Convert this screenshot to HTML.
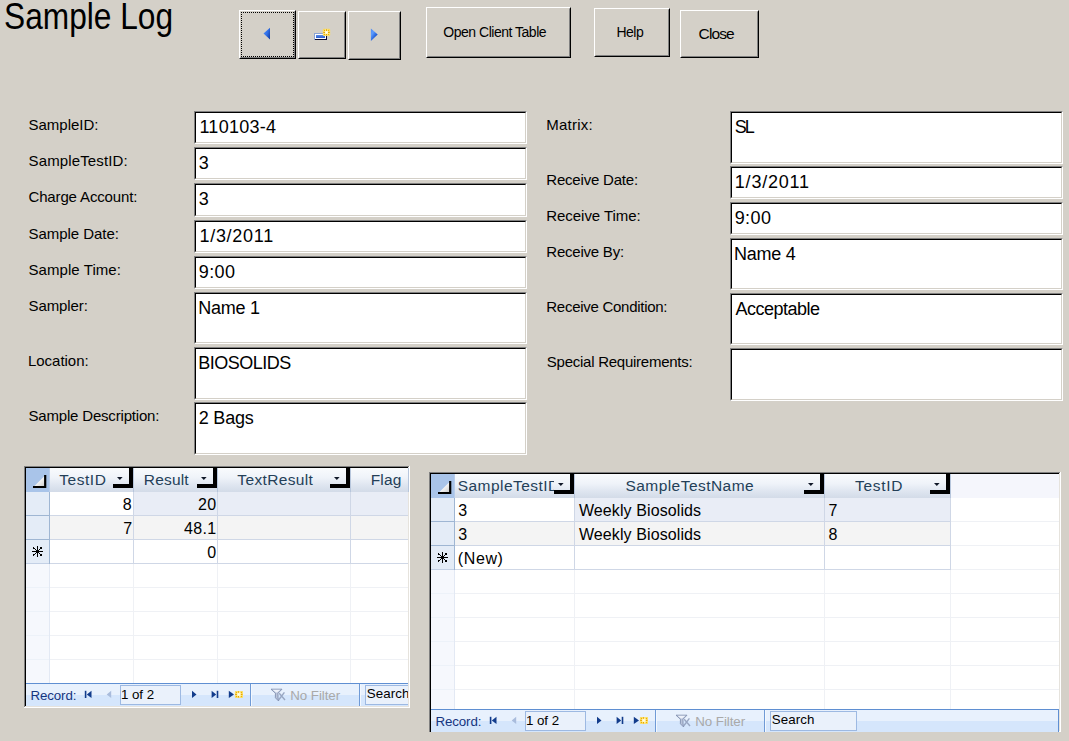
<!DOCTYPE html>
<html><head><meta charset="utf-8"><title>Sample Log</title>
<style>
html,body{margin:0;padding:0;}
body{width:1069px;height:741px;background:#d4d0c8;position:relative;overflow:hidden;font-family:"Liberation Sans",sans-serif;}
.t{position:absolute;white-space:pre;line-height:1;transform-origin:0 50%;}
div{position:absolute;box-sizing:border-box;}
.btn{border:1px solid;border-color:#fff #000 #000 #fff;background:#d4d0c8;}
.btn:after{content:"";position:absolute;left:0;top:0;right:0;bottom:0;border:1px solid;border-color:#d4d0c8 #808080 #808080 #d4d0c8;}
.fld{background:#fff;border:1px solid;border-color:#808080 #fff #fff #808080;}
.fld:after{content:"";position:absolute;left:0;top:0;right:0;bottom:0;border:1px solid;border-color:#000 #d4d0c8 #d4d0c8 #000;}
.frame{background:#fff;border:1px solid;border-color:#808080 #fff #fff #808080;overflow:hidden;}
.frame>.in{left:0;top:0;right:0;bottom:0;border:1px solid;border-color:#000 #d4d0c8 #d4d0c8 #000;border-right:none;border-bottom:none;overflow:hidden;}
.hl{height:1px;}
.vl{width:1px;}
svg{position:absolute;overflow:visible;}
</style></head><body>

<span class="t " style="top:-1px;font-size:36px;color:#000;left:4.4px;transform:scaleX(0.88);">Sample Log</span>
<div class="btn" style="left:239px;top:10px;width:57px;height:49px;"></div>
<div style="left:241px;top:12px;width:53px;height:1px;background:repeating-linear-gradient(90deg,#000 0 1px,transparent 1px 2px);"></div>
<div style="left:241px;top:56px;width:53px;height:1px;background:repeating-linear-gradient(90deg,#000 0 1px,transparent 1px 2px);"></div>
<div style="left:241px;top:12px;width:1px;height:45px;background:repeating-linear-gradient(180deg,#000 0 1px,transparent 1px 2px);"></div>
<div style="left:293px;top:12px;width:1px;height:45px;background:repeating-linear-gradient(180deg,#000 0 1px,transparent 1px 2px);"></div>
<div class="btn" style="left:298px;top:11px;width:48px;height:48px;"></div>
<div class="btn" style="left:348px;top:11px;width:53px;height:49px;"></div>
<div class="btn" style="left:426px;top:7px;width:145px;height:51px;"></div>
<div class="btn" style="left:594px;top:8px;width:76px;height:49px;"></div>
<div class="btn" style="left:680px;top:10px;width:79px;height:48px;"></div>
<svg style="left:0;top:0" width="1069" height="70">
<defs><linearGradient id="gb2" x1="0" y1="0" x2="0" y2="1"><stop offset="0" stop-color="#5a8ae6"/><stop offset="1" stop-color="#2c5fd2"/></linearGradient><radialGradient id="gs" cx="0.5" cy="0.5" r="0.6"><stop offset="0" stop-color="#ffffff"/><stop offset="0.35" stop-color="#fff5b5"/><stop offset="1" stop-color="#f9da58"/></radialGradient><linearGradient id="gl" x1="0" y1="0.2" x2="1" y2="0.8"><stop offset="0" stop-color="#4d8cf8"/><stop offset="0.55" stop-color="#2f6ee6"/><stop offset="1" stop-color="#143fa6"/></linearGradient><linearGradient id="gr" x1="0" y1="0" x2="0.8" y2="1"><stop offset="0" stop-color="#4f8af2"/><stop offset="0.35" stop-color="#5b9bff"/><stop offset="0.7" stop-color="#2460d8"/><stop offset="1" stop-color="#0f3590"/></linearGradient></defs>
<path d="M263.5 33.6 L270 27.7 L270 39.6 Z" fill="url(#gl)"/>
<path d="M377.7 34.6 L370.9 28.5 L370.9 40.9 Z" fill="url(#gr)"/>
<rect x="314" y="33" width="13" height="7" fill="#fdfdff"/>
<rect x="314" y="33" width="12" height="1" fill="#8aa3d4"/><rect x="314" y="33" width="1" height="7" fill="#8aa3d4"/>
<rect x="315" y="39" width="12" height="1" fill="#0c0c30"/><rect x="326" y="34" width="1" height="6" fill="#0c0c30"/>
<rect x="316" y="35" width="9" height="3" fill="url(#gb2)"/>
<rect x="322.8" y="28.8" width="7.4" height="7.2" rx="1.2" fill="url(#gs)"/>
<path d="M326.5 29.3 v1.6 M326.5 33.9 v1.6 M323.3 32.4 h1.7 M328 32.4 h1.7" stroke="#e9a500" stroke-width="1.1"/>
<rect x="323.9" y="29.8" width="1.2" height="1.2" fill="#eeb000"/><rect x="327.9" y="29.8" width="1.2" height="1.2" fill="#eeb000"/><rect x="323.9" y="33.8" width="1.2" height="1.2" fill="#eeb000"/><rect x="327.9" y="33.8" width="1.2" height="1.2" fill="#eeb000"/>
</svg>
<span class="t " style="top:25px;font-size:14px;color:#000;left:443.37px;letter-spacing:-0.489px;">Open Client Table</span>
<span class="t " style="top:25px;font-size:14px;color:#000;left:616.38px;letter-spacing:-0.497px;">Help</span>
<span class="t " style="top:26px;font-size:15.5px;color:#000;left:698.62px;letter-spacing:-0.902px;">Close</span>
<span class="t " style="top:117px;font-size:15px;color:#000;left:28.52px;letter-spacing:-0.003px;">SampleID:</span>
<span class="t " style="top:153px;font-size:15px;color:#000;left:28.52px;letter-spacing:0.138px;">SampleTestID:</span>
<span class="t " style="top:189px;font-size:15px;color:#000;left:28.45px;letter-spacing:-0.138px;">Charge Account:</span>
<span class="t " style="top:226px;font-size:15px;color:#000;left:28.52px;letter-spacing:-0.043px;">Sample Date:</span>
<span class="t " style="top:262px;font-size:15px;color:#000;left:28.52px;letter-spacing:0.064px;">Sample Time:</span>
<span class="t " style="top:298px;font-size:15px;color:#000;left:28.52px;letter-spacing:-0.093px;">Sampler:</span>
<span class="t " style="top:353px;font-size:15px;color:#000;left:28.0px;letter-spacing:-0.031px;">Location:</span>
<span class="t " style="top:408px;font-size:15px;color:#000;left:28.52px;letter-spacing:-0.185px;">Sample Description:</span>
<span class="t " style="top:117px;font-size:15px;color:#000;left:546.3px;letter-spacing:0.225px;">Matrix:</span>
<span class="t " style="top:172px;font-size:15px;color:#000;left:546.3px;letter-spacing:-0.202px;">Receive Date:</span>
<span class="t " style="top:208px;font-size:15px;color:#000;left:546.3px;letter-spacing:-0.054px;">Receive Time:</span>
<span class="t " style="top:244px;font-size:15px;color:#000;left:546.3px;letter-spacing:-0.225px;">Receive By:</span>
<span class="t " style="top:299px;font-size:15px;color:#000;left:546.3px;letter-spacing:-0.275px;">Receive Condition:</span>
<span class="t " style="top:354px;font-size:15px;color:#000;left:546.83px;letter-spacing:-0.253px;">Special Requirements:</span>
<div class="fld" style="left:194px;top:111px;width:333px;height:33px;"></div>
<span class="t " style="top:118px;font-size:18px;color:#000;left:199.45px;letter-spacing:0.257px;">110103-4</span>
<div class="fld" style="left:194px;top:147px;width:333px;height:33px;"></div>
<span class="t " style="top:154px;font-size:18px;color:#000;left:198.67px;">3</span>
<div class="fld" style="left:194px;top:183px;width:333px;height:34px;"></div>
<span class="t " style="top:190px;font-size:18px;color:#000;left:198.67px;">3</span>
<div class="fld" style="left:194px;top:220px;width:333px;height:33px;"></div>
<span class="t " style="top:227px;font-size:18px;color:#000;left:199.45px;letter-spacing:0.713px;">1/3/2011</span>
<div class="fld" style="left:194px;top:256px;width:333px;height:33px;"></div>
<span class="t " style="top:263px;font-size:18px;color:#000;left:198.79px;letter-spacing:0.41px;">9:00</span>
<div class="fld" style="left:194px;top:292px;width:333px;height:52px;"></div>
<span class="t " style="top:299px;font-size:18px;color:#000;left:198.16px;letter-spacing:-0.25px;">Name 1</span>
<div class="fld" style="left:194px;top:347px;width:333px;height:53px;"></div>
<span class="t " style="top:354px;font-size:18px;color:#000;left:198.16px;letter-spacing:-0.496px;">BIOSOLIDS</span>
<div class="fld" style="left:194px;top:402px;width:333px;height:53px;"></div>
<span class="t " style="top:409px;font-size:18px;color:#000;left:198.7px;letter-spacing:-0.188px;">2 Bags</span>
<div class="fld" style="left:730px;top:111px;width:333px;height:53px;"></div>
<span class="t " style="top:118px;font-size:18px;color:#000;left:734.69px;letter-spacing:-2.01px;">SL</span>
<div class="fld" style="left:730px;top:166px;width:333px;height:33px;"></div>
<span class="t " style="top:173px;font-size:18px;color:#000;left:734.85px;letter-spacing:0.77px;">1/3/2011</span>
<div class="fld" style="left:730px;top:202px;width:333px;height:33px;"></div>
<span class="t " style="top:209px;font-size:18px;color:#000;left:734.69px;letter-spacing:0.41px;">9:00</span>
<div class="fld" style="left:730px;top:238px;width:333px;height:52px;"></div>
<span class="t " style="top:245px;font-size:18px;color:#000;left:734.06px;letter-spacing:-0.242px;">Name 4</span>
<div class="fld" style="left:730px;top:293px;width:333px;height:52px;"></div>
<span class="t " style="top:300px;font-size:18px;color:#000;left:735.6px;letter-spacing:-0.51px;">Acceptable</span>
<div class="fld" style="left:730px;top:348px;width:333px;height:53px;"></div>
<div style="left:24px;top:466px;width:386px;height:242px;background:#fff;"></div>
<div style="left:24px;top:466px;width:386px;height:1px;background:#808080;"></div>
<div style="left:24px;top:466px;width:1px;height:242px;background:#808080;"></div>
<div style="left:25px;top:467px;width:385px;height:1px;background:#000;"></div>
<div style="left:25px;top:467px;width:1px;height:241px;background:#000;"></div>
<div style="left:409px;top:466px;width:1px;height:242px;background:#fff;"></div>
<div style="left:408px;top:467px;width:1px;height:240px;background:#e6e3dd;"></div>
<div style="left:24px;top:707px;width:386px;height:1px;background:#fff;"></div>
<div style="left:25px;top:706px;width:384px;height:1px;background:#e6e3dd;"></div>
<div style="left:26px;top:468px;width:23px;height:24px;background:#a9c4e9;"></div>
<svg style="left:26px;top:468px" width="23" height="24"><defs><linearGradient id="tg26" x1="0" y1="0" x2="1" y2="1"><stop offset="0.4" stop-color="#fdfdfd"/><stop offset="1" stop-color="#c8c8c8"/></linearGradient></defs><path d="M7.5 19 L19 7.5 L19 19 Z" fill="url(#tg26)"/><path d="M7 19 L19.2 19 L19.2 7" fill="none" stroke="#000" stroke-width="2.2"/></svg>
<div style="left:49px;top:468px;width:1px;height:24px;background:#b9cdea;"></div>
<div style="left:50px;top:468px;width:83px;height:24px;background:linear-gradient(#f9fbfd 0%,#eff3f9 40%,#dde4ef 75%,#d3dbe8 100%);"></div>
<div style="left:133px;top:468px;width:1px;height:24px;background:#b7c6dc;"></div>
<span class="t " style="top:472px;font-size:15.5px;color:#243f58;left:59.19px;letter-spacing:0.548px;">TestID</span>
<div style="left:129px;top:468px;width:4px;height:20px;background:#000;"></div>
<div style="left:113px;top:484px;width:20px;height:4px;background:#000;"></div>
<svg style="left:117.4px;top:477px" width="6" height="4"><path d="M0 0 L5.6 0 L2.8 3 Z" fill="#101828"/></svg>
<div style="left:134px;top:468px;width:83px;height:24px;background:linear-gradient(#f9fbfd 0%,#eff3f9 40%,#dde4ef 75%,#d3dbe8 100%);"></div>
<div style="left:217px;top:468px;width:1px;height:24px;background:#b7c6dc;"></div>
<span class="t " style="top:472px;font-size:15.5px;color:#243f58;left:143.76px;letter-spacing:0.191px;">Result</span>
<div style="left:213px;top:468px;width:4px;height:20px;background:#000;"></div>
<div style="left:197px;top:484px;width:20px;height:4px;background:#000;"></div>
<svg style="left:201.4px;top:477px" width="6" height="4"><path d="M0 0 L5.6 0 L2.8 3 Z" fill="#101828"/></svg>
<div style="left:218px;top:468px;width:132px;height:24px;background:linear-gradient(#f9fbfd 0%,#eff3f9 40%,#dde4ef 75%,#d3dbe8 100%);"></div>
<div style="left:350px;top:468px;width:1px;height:24px;background:#b7c6dc;"></div>
<span class="t " style="top:472px;font-size:15.5px;color:#243f58;left:237.29px;letter-spacing:0.364px;">TextResult</span>
<div style="left:346px;top:468px;width:4px;height:20px;background:#000;"></div>
<div style="left:330px;top:484px;width:20px;height:4px;background:#000;"></div>
<svg style="left:334.4px;top:477px" width="6" height="4"><path d="M0 0 L5.6 0 L2.8 3 Z" fill="#101828"/></svg>
<div style="left:351px;top:468px;width:57px;height:24px;background:linear-gradient(#f9fbfd 0%,#eff3f9 40%,#dde4ef 75%,#d3dbe8 100%);"></div>
<div style="left:408px;top:468px;width:1px;height:24px;background:#b7c6dc;"></div>
<span class="t " style="top:472px;font-size:15.5px;color:#243f58;left:370.66px;letter-spacing:0.174px;">Flag</span>
<div style="left:26px;top:492px;width:23px;height:72px;background:#e4ecf7;"></div>
<div style="left:49px;top:492px;width:1px;height:72px;background:#9fb6d3;"></div>
<div style="left:26px;top:564px;width:23px;height:119px;background:#f6f8fd;"></div>
<div style="left:49px;top:564px;width:1px;height:119px;background:#e3e9f4;"></div>
<div style="left:134px;top:492px;width:274px;height:23px;background:#e9edf6;"></div>
<div style="left:50px;top:516px;width:358px;height:23px;background:#f4f4f4;"></div>
<div style="left:50px;top:515px;width:358px;height:1px;background:#cfd7e6;"></div>
<div style="left:26px;top:515px;width:23px;height:1px;background:#9fb6d3;"></div>
<div style="left:50px;top:539px;width:358px;height:1px;background:#cfd7e6;"></div>
<div style="left:26px;top:539px;width:23px;height:1px;background:#9fb6d3;"></div>
<div style="left:50px;top:563px;width:358px;height:1px;background:#cfd7e6;"></div>
<div style="left:26px;top:563px;width:23px;height:1px;background:#c3d0e5;"></div>
<div style="left:133px;top:492px;width:1px;height:72px;background:#cfd7e6;"></div>
<div style="left:133px;top:564px;width:1px;height:119px;background:#eff1f5;"></div>
<div style="left:217px;top:492px;width:1px;height:72px;background:#cfd7e6;"></div>
<div style="left:217px;top:564px;width:1px;height:119px;background:#eff1f5;"></div>
<div style="left:350px;top:492px;width:1px;height:72px;background:#cfd7e6;"></div>
<div style="left:350px;top:564px;width:1px;height:119px;background:#eff1f5;"></div>
<div style="left:50px;top:587px;width:358px;height:1px;background:#eff1f5;"></div>
<div style="left:26px;top:587px;width:23px;height:1px;background:#edf2f9;"></div>
<div style="left:50px;top:611px;width:358px;height:1px;background:#eff1f5;"></div>
<div style="left:26px;top:611px;width:23px;height:1px;background:#edf2f9;"></div>
<div style="left:50px;top:635px;width:358px;height:1px;background:#eff1f5;"></div>
<div style="left:26px;top:635px;width:23px;height:1px;background:#edf2f9;"></div>
<div style="left:50px;top:659px;width:358px;height:1px;background:#eff1f5;"></div>
<div style="left:26px;top:659px;width:23px;height:1px;background:#edf2f9;"></div>
<span class="t " style="top:497px;font-size:16px;color:#000;left:122.66px;">8</span>
<span class="t " style="top:497px;font-size:16px;color:#000;left:198.0px;letter-spacing:0.4px;">20</span>
<span class="t " style="top:521px;font-size:16px;color:#000;left:123.3px;">7</span>
<span class="t " style="top:521px;font-size:16px;color:#000;left:183.88px;letter-spacing:0.373px;">48.1</span>
<span class="t " style="top:545px;font-size:16px;color:#000;left:207.16px;">0</span>
<svg style="left:32px;top:546px" width="11" height="11" shape-rendering="crispEdges" fill="#000"><rect x="5" y="0" width="1" height="11"/><rect x="0" y="5" width="11" height="1"/><rect x="4" y="4" width="3" height="3"/><rect x="3" y="3" width="1" height="1"/><rect x="7" y="3" width="1" height="1"/><rect x="3" y="7" width="1" height="1"/><rect x="7" y="7" width="1" height="1"/><rect x="1" y="1" width="1" height="2"/><rect x="2" y="2" width="1" height="1"/><rect x="8" y="1" width="2" height="2"/><rect x="1" y="8" width="1" height="2"/><rect x="2" y="8" width="1" height="1"/><rect x="8" y="8" width="2" height="2"/></svg>
<div style="left:26px;top:683px;width:382px;height:1px;background:#5f8fd2;"></div>
<div style="left:26px;top:684px;width:382px;height:11px;background:#e8f1fd;"></div>
<div style="left:26px;top:695px;width:382px;height:11px;background:#d5e6fc;"></div>
<span class="t " style="top:689px;font-size:13.33px;color:#15357f;left:30.43px;letter-spacing:-0.109px;">Record:</span>
<svg style="left:0;top:0" width="1069" height="741"><rect x="84.8" y="690.8" width="1.6" height="7.2" fill="#123c8c"/><path d="M91.5 690.8 L91.5 698.0 L86.8 694.4 Z" fill="#123c8c"/><path d="M111.2 690.8 L111.2 698.0 L106.7 694.4 Z" fill="#a9bcdc"/><path d="M192 690.8 L192 698.0 L196.5 694.4 Z" fill="#123c8c"/><path d="M211.6 690.8 L211.6 698.0 L216.2 694.4 Z" fill="#123c8c"/><rect x="216.7" y="690.8" width="1.6" height="7.2" fill="#123c8c"/><path d="M228.8 690.8 L228.8 698.0 L234.0 694.4 Z" fill="#123c8c"/><rect x="234.9" y="690.9" width="8.1" height="7" rx="0.8" fill="url(#gs)"/><path d="M238.45000000000002 691.1999999999999 v1.6 M238.45000000000002 696.0 v1.6 M235.20000000000002 694.4 h1.7 M240.8 694.4 h1.7" stroke="#e9a500" stroke-width="1.1"/><rect x="235.9" y="691.9" width="1.2" height="1.2" fill="#eeb000"/><rect x="240.8" y="691.9" width="1.2" height="1.2" fill="#eeb000"/><rect x="235.9" y="695.8" width="1.2" height="1.2" fill="#eeb000"/><rect x="240.8" y="695.8" width="1.2" height="1.2" fill="#eeb000"/></svg>
<div style="left:120px;top:685px;width:61px;height:20px;background:#eaf1fb;border:1px solid #9db9e2;"></div>
<span class="t " style="top:688px;font-size:13.33px;color:#000;left:120.9px;letter-spacing:-0.032px;">1 of 2</span>
<div style="left:250px;top:684px;width:1px;height:22px;background:#6f9ad6;"></div>
<div style="left:251px;top:684px;width:1px;height:22px;background:#f3f8fe;"></div>
<div style="left:359px;top:684px;width:1px;height:22px;background:#6f9ad6;"></div>
<div style="left:360px;top:684px;width:1px;height:22px;background:#f3f8fe;"></div>
<svg style="left:270px;top:688px" width="16" height="14"><path d="M1 1.2 L12 1.2 L8 5.2 L8 10 L8.6 13 L5.4 9.8 L5.4 5.2 Z" fill="#b9c4da" stroke="#8190b0" stroke-width="0.9" stroke-linejoin="round"/><path d="M2.5 1.8 L10.5 1.8 L7 4.6 L6 4.6 Z" fill="#eef2fa"/><path d="M9.2 5.2 L15 12 M14.4 4.4 L8.6 12" stroke="#98a6c2" stroke-width="1.4" fill="none"/></svg>
<span class="t " style="top:689px;font-size:13.33px;color:#a9a9a9;left:290.23px;letter-spacing:-0.053px;">No Filter</span>
<div style="left:365px;top:685px;width:45px;height:20px;background:#eaf1fb;border:1px solid #9db9e2;border-right:none;"></div>
<span class="t " style="top:687px;font-size:13.33px;color:#000;left:366.7px;letter-spacing:0.102px;">Search</span>
<div style="left:408px;top:684px;width:1px;height:23px;background:#e6e3dd;"></div>
<div style="left:409px;top:684px;width:1px;height:24px;background:#fff;"></div>
<div style="left:410px;top:684px;width:6px;height:24px;background:#d4d0c8;"></div>
<div style="left:429px;top:472px;width:632px;height:260px;background:#fff;"></div>
<div style="left:429px;top:472px;width:632px;height:1px;background:#808080;"></div>
<div style="left:429px;top:472px;width:1px;height:260px;background:#808080;"></div>
<div style="left:430px;top:473px;width:631px;height:1px;background:#000;"></div>
<div style="left:430px;top:473px;width:1px;height:259px;background:#000;"></div>
<div style="left:1060px;top:472px;width:1px;height:260px;background:#fff;"></div>
<div style="left:1059px;top:473px;width:1px;height:258px;background:#e6e3dd;"></div>
<div style="left:431px;top:474px;width:23px;height:24px;background:#a9c4e9;"></div>
<svg style="left:431px;top:474px" width="23" height="24"><defs><linearGradient id="tg431" x1="0" y1="0" x2="1" y2="1"><stop offset="0.4" stop-color="#fdfdfd"/><stop offset="1" stop-color="#c8c8c8"/></linearGradient></defs><path d="M7.5 19 L19 7.5 L19 19 Z" fill="url(#tg431)"/><path d="M7 19 L19.2 19 L19.2 7" fill="none" stroke="#000" stroke-width="2.2"/></svg>
<div style="left:454px;top:474px;width:1px;height:24px;background:#b9cdea;"></div>
<div style="left:455px;top:474px;width:119px;height:24px;background:linear-gradient(#f9fbfd 0%,#eff3f9 40%,#dde4ef 75%,#d3dbe8 100%);"></div>
<div style="left:574px;top:474px;width:1px;height:24px;background:#b7c6dc;"></div>
<div style="left:455px;top:474px;width:98.5px;height:24px;overflow:hidden;"><span class="t" style="left:2.70px;top:4.00px;font-size:15.5px;color:#243f58;letter-spacing:0.456px;">SampleTestID</span></div>
<div style="left:570px;top:474px;width:4px;height:20px;background:#000;"></div>
<div style="left:554px;top:490px;width:20px;height:4px;background:#000;"></div>
<svg style="left:558.4px;top:483px" width="6" height="4"><path d="M0 0 L5.6 0 L2.8 3 Z" fill="#101828"/></svg>
<div style="left:575px;top:474px;width:249px;height:24px;background:linear-gradient(#f9fbfd 0%,#eff3f9 40%,#dde4ef 75%,#d3dbe8 100%);"></div>
<div style="left:824px;top:474px;width:1px;height:24px;background:#b7c6dc;"></div>
<span class="t " style="top:478px;font-size:15.5px;color:#243f58;left:625.4px;letter-spacing:0.456px;">SampleTestName</span>
<div style="left:820px;top:474px;width:4px;height:20px;background:#000;"></div>
<div style="left:804px;top:490px;width:20px;height:4px;background:#000;"></div>
<svg style="left:808.4px;top:483px" width="6" height="4"><path d="M0 0 L5.6 0 L2.8 3 Z" fill="#101828"/></svg>
<div style="left:825px;top:474px;width:125px;height:24px;background:linear-gradient(#f9fbfd 0%,#eff3f9 40%,#dde4ef 75%,#d3dbe8 100%);"></div>
<div style="left:950px;top:474px;width:1px;height:24px;background:#b7c6dc;"></div>
<span class="t " style="top:478px;font-size:15.5px;color:#243f58;left:855.09px;letter-spacing:0.669px;">TestID</span>
<div style="left:946px;top:474px;width:4px;height:20px;background:#000;"></div>
<div style="left:930px;top:490px;width:20px;height:4px;background:#000;"></div>
<svg style="left:934.4px;top:483px" width="6" height="4"><path d="M0 0 L5.6 0 L2.8 3 Z" fill="#101828"/></svg>
<div style="left:951px;top:474px;width:108px;height:24px;background:#f5f6fc;"></div>
<div style="left:431px;top:498px;width:23px;height:72px;background:#e4ecf7;"></div>
<div style="left:454px;top:498px;width:1px;height:72px;background:#9fb6d3;"></div>
<div style="left:431px;top:570px;width:23px;height:139px;background:#f6f8fd;"></div>
<div style="left:454px;top:570px;width:1px;height:139px;background:#e3e9f4;"></div>
<div style="left:575px;top:498px;width:375px;height:23px;background:#e9edf6;"></div>
<div style="left:455px;top:522px;width:495px;height:23px;background:#f4f4f4;"></div>
<div style="left:455px;top:521px;width:496px;height:1px;background:#cfd7e6;"></div>
<div style="left:951px;top:521px;width:108px;height:1px;background:#eff1f5;"></div>
<div style="left:431px;top:521px;width:23px;height:1px;background:#9fb6d3;"></div>
<div style="left:455px;top:545px;width:496px;height:1px;background:#cfd7e6;"></div>
<div style="left:951px;top:545px;width:108px;height:1px;background:#eff1f5;"></div>
<div style="left:431px;top:545px;width:23px;height:1px;background:#9fb6d3;"></div>
<div style="left:455px;top:569px;width:496px;height:1px;background:#cfd7e6;"></div>
<div style="left:951px;top:569px;width:108px;height:1px;background:#eff1f5;"></div>
<div style="left:431px;top:569px;width:23px;height:1px;background:#c3d0e5;"></div>
<div style="left:574px;top:498px;width:1px;height:72px;background:#cfd7e6;"></div>
<div style="left:574px;top:570px;width:1px;height:139px;background:#eff1f5;"></div>
<div style="left:824px;top:498px;width:1px;height:72px;background:#cfd7e6;"></div>
<div style="left:824px;top:570px;width:1px;height:139px;background:#eff1f5;"></div>
<div style="left:950px;top:498px;width:1px;height:72px;background:#cfd7e6;"></div>
<div style="left:950px;top:570px;width:1px;height:139px;background:#eff1f5;"></div>
<div style="left:455px;top:593px;width:604px;height:1px;background:#eff1f5;"></div>
<div style="left:431px;top:593px;width:23px;height:1px;background:#edf2f9;"></div>
<div style="left:455px;top:617px;width:604px;height:1px;background:#eff1f5;"></div>
<div style="left:431px;top:617px;width:23px;height:1px;background:#edf2f9;"></div>
<div style="left:455px;top:641px;width:604px;height:1px;background:#eff1f5;"></div>
<div style="left:431px;top:641px;width:23px;height:1px;background:#edf2f9;"></div>
<div style="left:455px;top:665px;width:604px;height:1px;background:#eff1f5;"></div>
<div style="left:431px;top:665px;width:23px;height:1px;background:#edf2f9;"></div>
<div style="left:455px;top:689px;width:604px;height:1px;background:#eff1f5;"></div>
<div style="left:431px;top:689px;width:23px;height:1px;background:#edf2f9;"></div>
<span class="t " style="top:503px;font-size:16px;color:#000;left:458.24px;">3</span>
<span class="t " style="top:503px;font-size:16px;color:#000;left:578.92px;letter-spacing:0.1px;">Weekly Biosolids</span>
<span class="t " style="top:503px;font-size:16px;color:#000;left:828.5px;">7</span>
<span class="t " style="top:527px;font-size:16px;color:#000;left:458.24px;">3</span>
<span class="t " style="top:527px;font-size:16px;color:#000;left:578.92px;letter-spacing:0.1px;">Weekly Biosolids</span>
<span class="t " style="top:527px;font-size:16px;color:#000;left:828.46px;">8</span>
<span class="t " style="top:551px;font-size:16px;color:#000;left:457.84px;letter-spacing:0.595px;">(New)</span>
<svg style="left:437px;top:552px" width="11" height="11" shape-rendering="crispEdges" fill="#000"><rect x="5" y="0" width="1" height="11"/><rect x="0" y="5" width="11" height="1"/><rect x="4" y="4" width="3" height="3"/><rect x="3" y="3" width="1" height="1"/><rect x="7" y="3" width="1" height="1"/><rect x="3" y="7" width="1" height="1"/><rect x="7" y="7" width="1" height="1"/><rect x="1" y="1" width="1" height="2"/><rect x="2" y="2" width="1" height="1"/><rect x="8" y="1" width="2" height="2"/><rect x="1" y="8" width="1" height="2"/><rect x="2" y="8" width="1" height="1"/><rect x="8" y="8" width="2" height="2"/></svg>
<div style="left:431px;top:709px;width:628px;height:1px;background:#5f8fd2;"></div>
<div style="left:431px;top:710px;width:628px;height:11px;background:#e8f1fd;"></div>
<div style="left:431px;top:721px;width:628px;height:11px;background:#d5e6fc;"></div>
<div style="left:1058px;top:709px;width:1px;height:23px;background:#5f8fd2;"></div>
<span class="t " style="top:715px;font-size:13.33px;color:#15357f;left:435.43px;letter-spacing:-0.109px;">Record:</span>
<svg style="left:0;top:0" width="1069" height="741"><rect x="489.8" y="716.8" width="1.6" height="7.2" fill="#123c8c"/><path d="M496.5 716.8 L496.5 724.0 L491.8 720.4 Z" fill="#123c8c"/><path d="M516.2 716.8 L516.2 724.0 L511.7 720.4 Z" fill="#a9bcdc"/><path d="M597 716.8 L597 724.0 L601.5 720.4 Z" fill="#123c8c"/><path d="M616.6 716.8 L616.6 724.0 L621.2 720.4 Z" fill="#123c8c"/><rect x="621.7" y="716.8" width="1.6" height="7.2" fill="#123c8c"/><path d="M633.8 716.8 L633.8 724.0 L639.0 720.4 Z" fill="#123c8c"/><rect x="639.9" y="716.9" width="8.1" height="7" rx="0.8" fill="url(#gs)"/><path d="M643.4499999999999 717.1999999999999 v1.6 M643.4499999999999 722.0 v1.6 M640.1999999999999 720.4 h1.7 M645.8 720.4 h1.7" stroke="#e9a500" stroke-width="1.1"/><rect x="640.9" y="717.9" width="1.2" height="1.2" fill="#eeb000"/><rect x="645.8" y="717.9" width="1.2" height="1.2" fill="#eeb000"/><rect x="640.9" y="721.8" width="1.2" height="1.2" fill="#eeb000"/><rect x="645.8" y="721.8" width="1.2" height="1.2" fill="#eeb000"/></svg>
<div style="left:525px;top:711px;width:61px;height:20px;background:#eaf1fb;border:1px solid #9db9e2;"></div>
<span class="t " style="top:714px;font-size:13.33px;color:#000;left:525.9px;letter-spacing:-0.032px;">1 of 2</span>
<div style="left:655px;top:710px;width:1px;height:22px;background:#6f9ad6;"></div>
<div style="left:656px;top:710px;width:1px;height:22px;background:#f3f8fe;"></div>
<div style="left:764px;top:710px;width:1px;height:22px;background:#6f9ad6;"></div>
<div style="left:765px;top:710px;width:1px;height:22px;background:#f3f8fe;"></div>
<svg style="left:675px;top:714px" width="16" height="14"><path d="M1 1.2 L12 1.2 L8 5.2 L8 10 L8.6 13 L5.4 9.8 L5.4 5.2 Z" fill="#b9c4da" stroke="#8190b0" stroke-width="0.9" stroke-linejoin="round"/><path d="M2.5 1.8 L10.5 1.8 L7 4.6 L6 4.6 Z" fill="#eef2fa"/><path d="M9.2 5.2 L15 12 M14.4 4.4 L8.6 12" stroke="#98a6c2" stroke-width="1.4" fill="none"/></svg>
<span class="t " style="top:715px;font-size:13.33px;color:#a9a9a9;left:695.23px;letter-spacing:-0.053px;">No Filter</span>
<div style="left:770px;top:711px;width:87px;height:20px;background:#eaf1fb;border:1px solid #9db9e2;"></div>
<span class="t " style="top:713px;font-size:13.33px;color:#000;left:771.7px;letter-spacing:0.102px;">Search</span>
</body></html>
